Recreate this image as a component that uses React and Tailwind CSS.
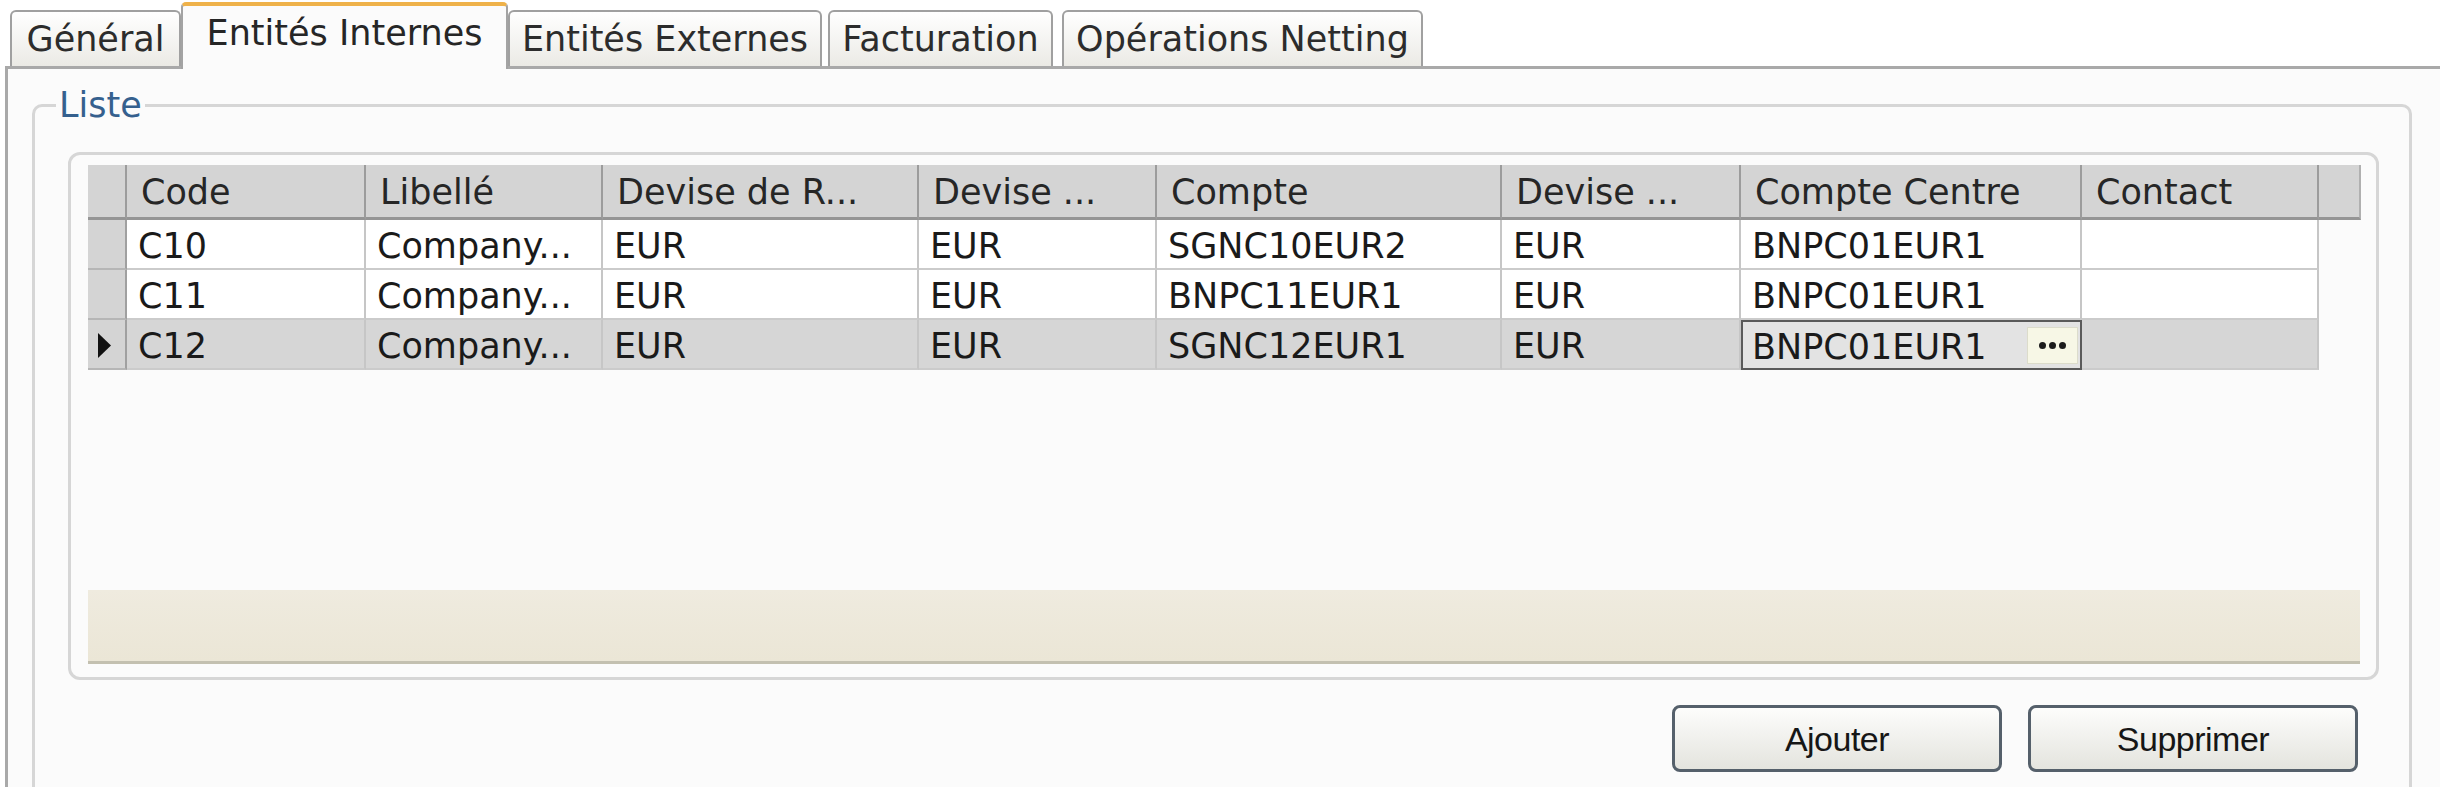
const TABS = [
  { label: 'Général', w: 'w-[171px]' },
  { label: 'Entités Internes', active: true },
  { label: 'Entités Externes', w: 'w-[314px]' },
  { label: 'Facturation', w: 'w-[225px] ml-[6px]' },
  { label: 'Opérations Netting', w: 'w-[361px] ml-[9px]' },
];

const COLUMNS = ['Code', 'Libellé', 'Devise de R...', 'Devise ...', 'Compte', 'Devise ...', 'Compte Centre', 'Contact'];

const ROWS = [
  ['C10', 'Company...', 'EUR', 'EUR', 'SGNC10EUR2', 'EUR', 'BNPC01EUR1', ''],
  ['C11', 'Company...', 'EUR', 'EUR', 'BNPC11EUR1', 'EUR', 'BNPC01EUR1', ''],
  ['C12', 'Company...', 'EUR', 'EUR', 'SGNC12EUR1', 'EUR', 'BNPC01EUR1', ''],
];

const GRID_COLS = 'grid grid-cols-[39px_239px_237px_316px_238px_345px_239px_341px_237px_42px]';

function Tab({ label, active, w }) {
  if (active) {
    return (
      <div className="relative z-10 -mb-[3px] w-[327px] h-[67px] border-x-2 border-t-[4px] border-x-[#a3a3a3] border-t-[#efb24a] rounded-t-[5px] bg-[#fbfbfb] flex items-center justify-center pb-[8px] text-[#262626]">
        {label}
      </div>
    );
  }
  return (
    <div className={`${w} h-[56px] border-2 border-b-0 border-[#a0a0a0] rounded-t-[6px] bg-gradient-to-b from-white to-[#ebeae5] flex items-center justify-center text-[#2c2c2c]`}>
      {label}
    </div>
  );
}

function Grid() {
  return (
    <div className="w-[2273px]">
      <div className={GRID_COLS}>
        <div className="h-[55px] bg-[#d4d4d4] border-r-2 border-r-[#9c9c9c] border-b-[3px] border-b-[#959595]" />
        {COLUMNS.map((c, i) => (
          <div key={i} className="h-[55px] bg-[#d4d4d4] border-r-2 border-r-[#9c9c9c] border-b-[3px] border-b-[#959595] flex items-center pl-[14px] pt-[2px] text-[#262626] whitespace-nowrap overflow-hidden">
            {c}
          </div>
        ))}
        <div className="h-[55px] bg-[#d4d4d4] border-r-2 border-r-[#b0b0b0] border-b-[3px] border-b-[#959595]" />
      </div>
      {ROWS.map((row, r) => {
        const selected = r === 2;
        return (
          <div key={r} className={GRID_COLS}>
            <div className="h-[50px] bg-[#d4d4d4] border-r-2 border-r-[#a0a0a0] border-b-2 border-b-[#b6b6b6] flex items-center pl-[9px] pt-[3px]">
              {selected && (
                <svg width="15" height="27" viewBox="0 0 15 27">
                  <path d="M1 1 L14 13.5 L1 26 Z" fill="#111" />
                </svg>
              )}
            </div>
            {row.map((v, c) => {
              if (selected && c === 6) {
                return (
                  <div key={c} className="h-[50px] bg-[#e3e3e3] border-2 border-[#5a5a5a] flex items-center pl-[9px] pt-[4px] text-[#1a1a1a]">
                    <span>{v}</span>
                    <div className="ml-auto mr-[2px] -mt-[4px] w-[51px] h-[37px] bg-[#f7f7e6] border border-[#dcdccb] flex items-center justify-center gap-[3px]">
                      <span className="w-[7px] h-[7px] rounded-full bg-[#1c1c1c]" />
                      <span className="w-[7px] h-[7px] rounded-full bg-[#1c1c1c]" />
                      <span className="w-[7px] h-[7px] rounded-full bg-[#1c1c1c]" />
                    </div>
                  </div>
                );
              }
              return (
                <div key={c} className={`h-[50px] ${selected ? 'bg-[#d6d6d6]' : 'bg-white'} border-r-2 border-r-[#c6c6c6] border-b-2 border-b-[#cbcbcb] flex items-center pl-[11px] pt-[5px] text-[#1a1a1a] whitespace-nowrap overflow-hidden`}>
                  {v}
                </div>
              );
            })}
          </div>
        );
      })}
    </div>
  );
}

function XpButton({ children }) {
  return (
    <button className="w-[330px] h-[67px] rounded-[8px] border-[3px] border-[#55606b] bg-gradient-to-b from-[#fdfdfc] to-[#e4e4de] font-['Liberation_Sans',Arial,sans-serif] text-[34px] tracking-[-0.5px] text-[#161616] flex items-center justify-center">
      {children}
    </button>
  );
}

export default function App() {
  return (
    <div className="w-[2440px] h-[791px] bg-white overflow-hidden font-['DejaVu_Sans',Verdana,sans-serif] text-[35px] leading-none">
      <div className="h-[66px] flex items-end pl-[10px]">
        {TABS.map((t) => (
          <Tab key={t.label} {...t} />
        ))}
      </div>

      <div className="ml-[5px] h-[721px] border-l-[3px] border-t-[3px] border-[#a9a9a9] bg-[#fbfbfb] overflow-hidden">
        <fieldset className="mt-[15px] ml-[24px] w-[2380px] border-[3px] border-[#d6d6d6] rounded-[10px] pt-[26px] pb-[60px]">
          <legend className="ml-[21px] px-[3px] text-[#35608e] leading-[42px]">Liste</legend>

          <div className="ml-[33px] w-[2311px]">
            <div className="h-[528px] border-[3px] border-[#d6d6d6] rounded-[12px] bg-[#fbfbfb] flex flex-col pt-[10px] pl-[17px] pr-[15px] pb-[13px]">
              <Grid />
              <div className="flex-1" />
              <div className="w-[2272px] h-[74px] bg-gradient-to-b from-[#efebdf] to-[#ebe6d6] border-b-[3px] border-b-[#c3c0b0]" />
            </div>

            <div className="mt-[25px] flex justify-end gap-[26px] pr-[21px]">
              <XpButton>Ajouter</XpButton>
              <XpButton>Supprimer</XpButton>
            </div>
          </div>
        </fieldset>
      </div>
    </div>
  );
}
